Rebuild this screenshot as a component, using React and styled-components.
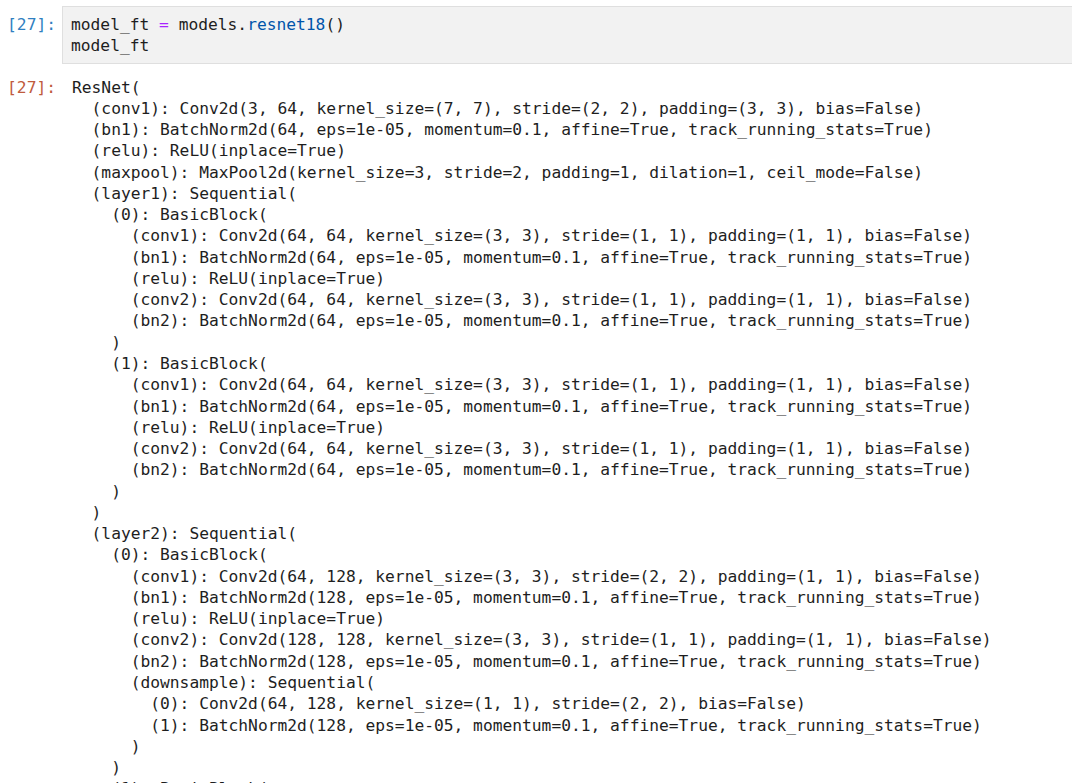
import React from "react";
import styled, { createGlobalStyle } from "styled-components";

const GlobalStyle = createGlobalStyle`
  html, body {
    margin: 0;
    padding: 0;
    background: #fff;
    overflow: hidden;
  }
`;

const Notebook = styled.div`
  padding-top: 6px;
  font-family: "DejaVu Sans Mono", "Liberation Mono", monospace;
  font-size: 16.26px;
  line-height: 21.27px;
  color: #1e1e1e;
`;

const Cell = styled.div`
  display: flex;
  align-items: flex-start;
  margin-bottom: ${(p) => p.gap || 0}px;
`;

const Prompt = styled.div`
  flex: 0 0 62px;
  box-sizing: border-box;
  padding-right: 6px;
  text-align: right;
  color: ${(p) => (p.out ? "#bf5b3d" : "#307fc1")};
  padding-top: ${(p) => p.top || 0}px;
  white-space: pre;
`;

const InputBox = styled.div`
  flex: 1;
  margin-right: -20px;
  background: #f2f2f2;
  border: 1px solid #dfdfdf;
  padding: 6.5px 8px;
  white-space: pre;
`;

const Op = styled.span`
  color: #aa22ff;
`;

const Prop = styled.span`
  color: #0055aa;
`;

const Output = styled.pre`
  flex: 1;
  margin: 0;
  padding-left: 10px;
  font: inherit;
  white-space: pre;
`;

const block64 = `    (%n): BasicBlock(
      (conv1): Conv2d(64, 64, kernel_size=(3, 3), stride=(1, 1), padding=(1, 1), bias=False)
      (bn1): BatchNorm2d(64, eps=1e-05, momentum=0.1, affine=True, track_running_stats=True)
      (relu): ReLU(inplace=True)
      (conv2): Conv2d(64, 64, kernel_size=(3, 3), stride=(1, 1), padding=(1, 1), bias=False)
      (bn2): BatchNorm2d(64, eps=1e-05, momentum=0.1, affine=True, track_running_stats=True)
    )`;

const repr = `ResNet(
  (conv1): Conv2d(3, 64, kernel_size=(7, 7), stride=(2, 2), padding=(3, 3), bias=False)
  (bn1): BatchNorm2d(64, eps=1e-05, momentum=0.1, affine=True, track_running_stats=True)
  (relu): ReLU(inplace=True)
  (maxpool): MaxPool2d(kernel_size=3, stride=2, padding=1, dilation=1, ceil_mode=False)
  (layer1): Sequential(
${block64.replace("%n", "0")}
${block64.replace("%n", "1")}
  )
  (layer2): Sequential(
    (0): BasicBlock(
      (conv1): Conv2d(64, 128, kernel_size=(3, 3), stride=(2, 2), padding=(1, 1), bias=False)
      (bn1): BatchNorm2d(128, eps=1e-05, momentum=0.1, affine=True, track_running_stats=True)
      (relu): ReLU(inplace=True)
      (conv2): Conv2d(128, 128, kernel_size=(3, 3), stride=(1, 1), padding=(1, 1), bias=False)
      (bn2): BatchNorm2d(128, eps=1e-05, momentum=0.1, affine=True, track_running_stats=True)
      (downsample): Sequential(
        (0): Conv2d(64, 128, kernel_size=(1, 1), stride=(2, 2), bias=False)
        (1): BatchNorm2d(128, eps=1e-05, momentum=0.1, affine=True, track_running_stats=True)
      )
    )
    (1): BasicBlock(`;

export default function App() {
  return (
    <>
      <GlobalStyle />
      <Notebook>
        <Cell gap={13}>
          <Prompt top={7.5}>[27]:</Prompt>
          <InputBox>
            model_ft <Op>=</Op> models.<Prop>resnet18</Prop>(){"\n"}model_ft
          </InputBox>
        </Cell>
        <Cell>
          <Prompt out>[27]:</Prompt>
          <Output>{repr}</Output>
        </Cell>
      </Notebook>
    </>
  );
}
